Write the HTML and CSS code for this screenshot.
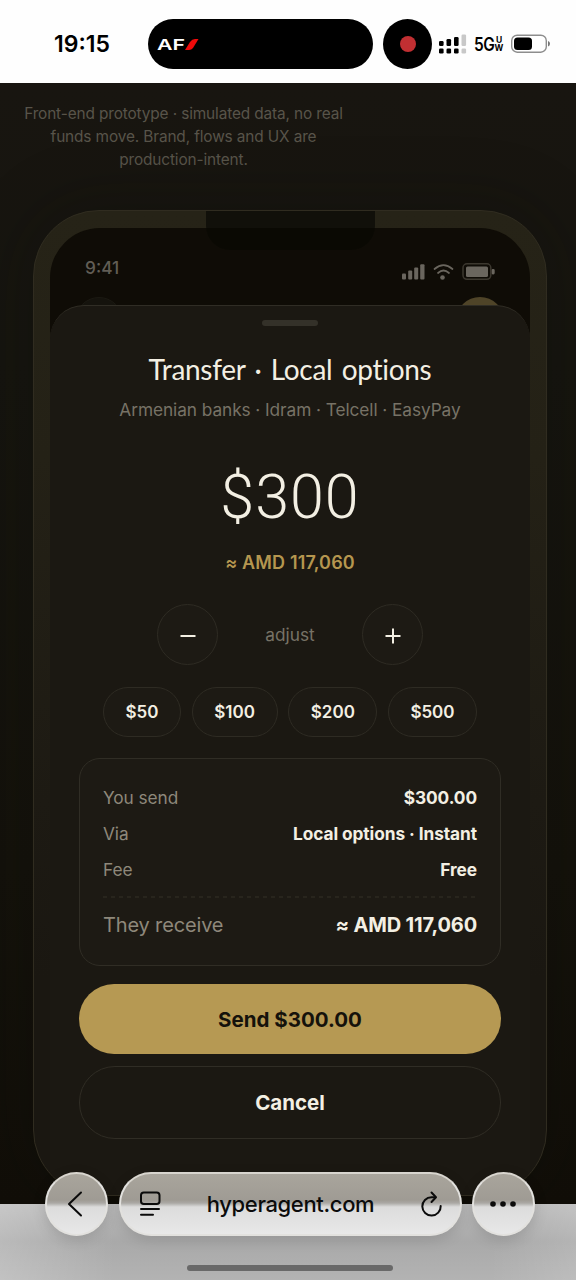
FILE: index.html
```html
<!DOCTYPE html>
<html lang="en">
<head>
<meta charset="utf-8">
<title>Transfer</title>
<link rel="stylesheet" href="styles.css">
</head>
<body>
<header class="os-status">
  <div class="os-time">19:15</div>
  <div class="island">
    <span class="af">AF</span>
    <svg width="14" height="11" viewBox="0 0 14 11"><path d="M0 11L5 3Q7 0 10 0H13.500L8 9Q6.500 11 4 11Z" fill="#f00a0a"/></svg>
  </div>
  <div class="record"><span></span></div>
  <svg class="os-signal" width="28" height="20" viewBox="0 0 28 20">
    <g fill="#000"><rect x="0" y="7" width="4.600" height="5" rx="1.300"/><rect x="7.500" y="5" width="4.600" height="7" rx="1.300"/><rect x="15" y="3" width="4.600" height="9" rx="1.300"/><rect x="0" y="14.500" width="4.600" height="5" rx="1.300"/><rect x="7.500" y="14.500" width="4.600" height="5" rx="1.300"/><rect x="15" y="14.500" width="4.600" height="5" rx="1.300"/></g>
    <g fill="#c8c8c8"><rect x="22.500" y="0.500" width="4.600" height="11.500" rx="1.300"/><rect x="22.500" y="14.500" width="4.600" height="5" rx="1.300"/></g>
  </svg>
  <div class="net"><span class="net-g">5G</span><span class="net-uw"><span>U</span><span>W</span></span></div>
  <svg class="os-batt" width="40" height="20" viewBox="0 0 40 20"><rect x="0.700" y="1.200" width="34.600" height="17" rx="5.500" fill="#fff" stroke="#8d8d8d" stroke-width="1.400"/><rect x="3" y="3.500" width="18" height="12.400" rx="3.500" fill="#000"/><path d="M37 7Q39 7.500 39 9.700T37 12.500Z" fill="#777"/></svg>
</header>

<main class="page">
  <p class="note">Front-end prototype · simulated data, no real<br>funds move. Brand, flows and UX are<br>production-intent.</p>
  <section class="phone">
    <div class="notch"></div>
    <div class="screen">
      <div class="phone-status">
        <span class="clock">9:41</span>
        <svg width="94" height="18" viewBox="0 0 94 18">
          <g fill="#6a665e"><rect x="0" y="10.500" width="4" height="6" rx="1"/><rect x="6.200" y="7.500" width="4" height="9" rx="1"/><rect x="12.200" y="4.500" width="4" height="12" rx="1"/><rect x="18.200" y="1.300" width="4.300" height="15.200" rx="1"/><circle cx="40.500" cy="14.500" r="2.300"/><rect x="64" y="3.500" width="22" height="10.500" rx="1.500"/><rect x="89.500" y="6" width="3.200" height="5.500" rx="1.400"/></g>
          <g fill="none" stroke="#6a665e" stroke-width="1.700" stroke-linecap="round"><path d="M32.500 6Q41.500-1.800 50.500 6"/><path d="M36 10Q41.500 5 47 10"/></g>
          <rect x="61" y="0.800" width="27.800" height="15.500" rx="4" fill="none" stroke="#3c382f" stroke-width="1.500"/>
        </svg>
      </div>
      <div class="avatars"><span class="avatar dim"></span><span class="avatar gold"></span></div>
    </div>
    <div class="sheet">
      <div class="grab"></div>
      <h1 class="title">Transfer · Local options</h1>
      <p class="sub">Armenian banks · Idram · Telcell · EasyPay</p>
      <div class="amount">$300</div>
      <div class="approx">≈ AMD 117,060</div>
      <div class="stepper">
        <button class="step"><svg width="16" height="16" viewBox="0 0 16 16"><path d="M0.500 8H15.500"/></svg></button>
        <span class="adjust">adjust</span>
        <button class="step"><svg width="16" height="16" viewBox="0 0 16 16"><path d="M0.500 8H15.500M8 0.500V15.500"/></svg></button>
      </div>
      <div class="chips"><button class="chip c50">$50</button><button class="chip c100">$100</button><button class="chip">$200</button><button class="chip">$500</button></div>
      <div class="card">
        <div class="row"><span class="k">You send</span><b class="v">$300.00</b></div>
        <div class="row"><span class="k">Via</span><b class="v">Local options · Instant</b></div>
        <div class="row"><span class="k">Fee</span><b class="v">Free</b></div>
        <svg class="dash" width="374" height="2" viewBox="0 0 374 2"><path d="M0 1H374" stroke="#343027" stroke-width="1.200" stroke-dasharray="4 4"/></svg>
        <div class="row total"><span class="k">They receive</span><b class="v">≈ AMD 117,060</b></div>
      </div>
      <button class="btn send">Send $300.00</button>
      <button class="btn cancel">Cancel</button>
    </div>
  </section>
</main>

<footer class="browser">
  <nav class="toolbar">
    <button class="glass round back"><svg width="16" height="26" viewBox="0 0 16 26"><path d="M14 1.500L2 13L14 24.500" fill="none" stroke="#0b0b0b" stroke-width="2" stroke-linecap="round" stroke-linejoin="round"/></svg></button>
    <div class="glass address">
      <svg width="22" height="26" viewBox="0 0 22 26" fill="none" stroke="#0b0b0b" stroke-width="2" stroke-linecap="round"><rect x="2" y="1.500" width="18.500" height="11.500" rx="2.800"/><path d="M2 18H20M2 23.800H14"/></svg>
      <span class="host">hyperagent.com</span>
      <svg width="22" height="26" viewBox="0 0 22 26" fill="none" stroke="#0b0b0b" stroke-width="2" stroke-linecap="round" stroke-linejoin="round"><path d="M14.500 6.200H11.500A9.200 9.200 0 1 0 20.700 15"/><path d="M11.500 1.500L16 6.200L11.500 11"/></svg>
    </div>
    <button class="glass round more"><svg width="28" height="8" viewBox="0 0 28 8" fill="#0b0b0b"><circle cx="4" cy="4" r="2.800"/><circle cx="14" cy="4" r="2.800"/><circle cx="24" cy="4" r="2.800"/></svg></button>
  </nav>
  <div class="home"></div>
</footer>
</body>
</html>
```
FILE: styles.css
```css
* { box-sizing: border-box; }
body { margin: 0; width: 576px; height: 1280px; overflow: hidden; display: flex; flex-direction: column; background: #fff; font-family: Inter, "Liberation Sans", sans-serif; color: #f3efe3; }
p, h1 { margin: 0; }
button { font: inherit; color: inherit; padding: 0; margin: 0; border: 0; background: none; }
svg { display: block; flex: none; overflow: visible; }

.os-status { flex: none; height: 83px; padding: 5px 0 0 54px; display: flex; align-items: center; color: #000; background: #fefefe; }
.os-time { width: 94px; font-size: 23px; font-weight: 600; letter-spacing: 0; }
.island { width: 225px; height: 50px; border-radius: 25px; background: #000; display: flex; align-items: center; padding-left: 9px; }
.af { width: 28px; color: #fff; font-size: 15px; font-weight: 600; letter-spacing: 0; transform: scaleX(1.42); transform-origin: 0 50%; }
.record { width: 49px; height: 50px; margin-left: 10px; border-radius: 50%; background: #000; display: flex; align-items: center; justify-content: center; }
.record span { width: 16px; height: 16px; border-radius: 50%; background: #c12f32; }
.os-signal { margin-left: 7px; }
.net { width: 30px; margin-left: 7px; display: flex; align-items: center; }
.net-g { width: 21px; font-size: 18px; font-weight: 600; letter-spacing: -0.5px; transform: scaleX(.86); transform-origin: 0 50%; }
.net-uw { display: flex; flex-direction: column; align-items: center; font-size: 8.500px; line-height: 8px; font-weight: 700; width: 8px; }
.os-batt { margin-left: 7px; }

.page { flex: none; height: 1121px; overflow: hidden; background: linear-gradient(180deg, #181510 0, #16150f 25%, #14120b 70%, #110e08 100%); }
.note { width: 319px; margin: 19px 0 0 24px; text-align: center; font-size: 15.400px; line-height: 23px; letter-spacing: -0.130px; color: #58544a; white-space: nowrap; }
.phone { position: relative; width: 514px; height: 986px; margin: 39px 0 0 33px; padding: 17px 16px 0; border: 1px solid #302c20; border-radius: 66px; background: linear-gradient(180deg, #262317 0, #242116 25%, #1d1a13 60%, #1a1711 78%); overflow: hidden; box-shadow: 0 0 60px 14px #0e0c0738; }
.notch { position: absolute; z-index: 1; left: 172px; top: -1px; width: 169px; height: 40px; border-radius: 0 0 24px 24px; background: linear-gradient(#11100a 0 18px, #0a0903 18px); }
.screen { height: 120px; padding-top: 28px; border-radius: 50px 50px 0 0; background: #0f0c06; }
.phone-status { height: 28px; padding: 0 34px 0 35px; display: flex; justify-content: space-between; }
.clock { line-height: 24px; font-size: 17.300px; font-weight: 500; color: #615d55; }
.phone-status svg { margin-top: 7px; }
.avatars { display: flex; justify-content: space-between; padding: 13px 26px 0 25px; }
.avatar { width: 48px; height: 48px; border-radius: 50%; border: 1px solid #1b1912; background: #15130d; }
.gold { border: 0; background: #4f4428; }
.sheet { position: relative; height: 890px; margin-top: -43px; padding: 14px 29px 0; border-top: 1px solid #302d25; border-radius: 34px 34px 0 0; background: #1b1812; display: flex; flex-direction: column; align-items: center; }
.grab { flex: none; width: 56px; height: 6px; border-radius: 3px; background: #343129; }
.title { height: 42px; margin-top: 22px; font-family: Lato, sans-serif; font-variant-ligatures: none; font-weight: 400; font-size: 28px; line-height: 42px; letter-spacing: -0.300px; word-spacing: 2.500px; white-space: nowrap; }
.sub { height: 24px; margin-top: 8px; font-size: 17.300px; line-height: 24px; letter-spacing: -0.080px; color: #777266; white-space: nowrap; }
.amount { height: 70px; margin-top: 40px; font-family: Roboto, sans-serif; font-weight: 300; font-size: 61px; line-height: 70px; letter-spacing: 1px; white-space: nowrap; }
.approx { height: 24px; margin-top: 19px; font-size: 18px; line-height: 24px; letter-spacing: 0.150px; font-weight: 600; color: #b5964f; white-space: nowrap; }
.stepper { width: 266px; height: 61px; margin-top: 29px; display: flex; align-items: center; justify-content: space-between; }
.step { width: 61px; height: 61px; border: 1px solid #2e2b23; border-radius: 50%; background: #1d1a14; display: flex; align-items: center; justify-content: center; }
.step svg { fill: none; stroke: #f3efe3; stroke-width: 2; margin-top: 3px; }
.adjust { font-size: 17.300px; color: #777266; }
.chips { width: 374px; margin-top: 22px; display: flex; justify-content: space-between; }
.chip { width: 89px; height: 50px; border: 1px solid #2e2b23; border-radius: 25px; background: #1d1a14; font-size: 17px; font-weight: 600; }
.c50 { width: 78px; }
.c100 { width: 86px; }
.card { flex: none; width: 422px; height: 208px; margin-top: 21px; padding: 20px 23px 0; border: 1px solid #302d25; border-radius: 21px; background: #1d1a14; }
.row { height: 36.300px; display: flex; align-items: center; justify-content: space-between; font-size: 17.300px; letter-spacing: -0.080px; white-space: nowrap; }
.k { color: #8e887b; }
.v { font-weight: 700; }
.dash { margin-top: 8px; }
.total { height: 55px; font-size: 20px; letter-spacing: -0.150px; }
.btn { flex: none; width: 422px; border-radius: 36px; font-size: 20.500px; font-weight: 700; }
.send { height: 70px; margin-top: 18px; background: #b69953; color: #15120b; }
.cancel { height: 73px; margin-top: 12px; border: 1px solid #302d25; }

.browser { position: relative; flex: none; height: 76px; padding-top: 61px; background: linear-gradient(90deg, #fff3 0, #fff0 20%, #fff0 85%, #fff2 100%), linear-gradient(#bababa 0, #a9a9a9 50%, #b3b3b3 100%); }
.toolbar { position: absolute; left: 45px; top: -32px; width: 490px; display: flex; justify-content: space-between; }
.glass { height: 64px; border: 2px solid #e2e1de; border-top-color: #d8d5ce; border-radius: 33px; background: linear-gradient(#a9a59c 0, #9f9b94 26px, #aaa8a4 29px, #dcdcdc 33px, #e8e8e8 60px); display: flex; align-items: center; box-shadow: 0 4px 14px #0002; }
.round { width: 63px; justify-content: center; }
.back { padding-right: 4px; }
.more { padding-right: 1px; }
.address { width: 343px; justify-content: space-between; padding: 0 17px 0 18px; }
.host { color: #0b0b0b; font-size: 22px; font-weight: 500; letter-spacing: -0.350px; }
.home { width: 206px; height: 6px; margin-left: 187px; border-radius: 3px; background: #696969; }
```
